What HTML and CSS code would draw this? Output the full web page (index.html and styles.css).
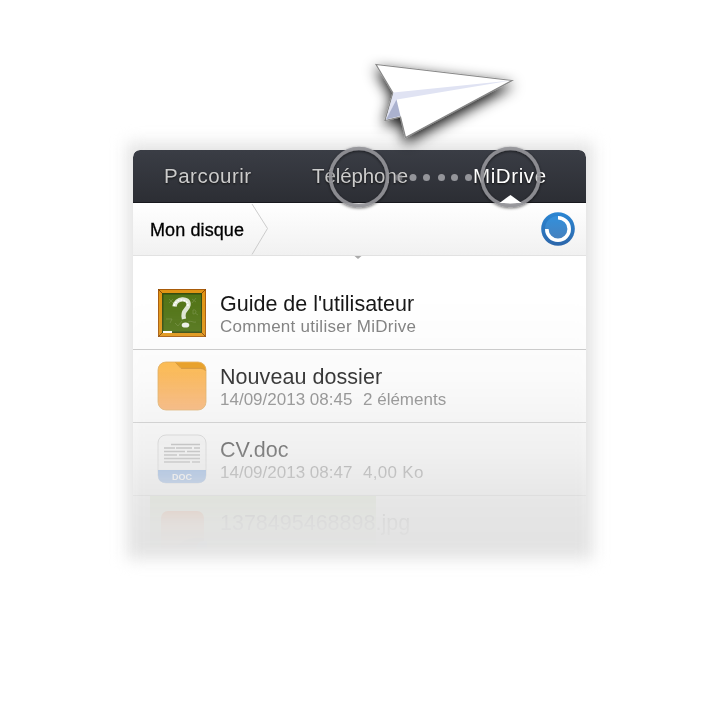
FILE: index.html
```
<!DOCTYPE html>
<html lang="fr">
<head>
<meta charset="utf-8">
<title>MiDrive</title>
<link rel="stylesheet" href="styles.css">
</head>
<body>
<main class="stage">
  <div class="glow"></div>
  <section class="app">
    <nav class="tabs">
      <span class="tab browse">Parcourir</span>
      <span class="tab phone">Téléphone</span>
      <span class="tab drive">MiDrive</span>
    </nav>
    <div class="crumbs">
      <span class="crumb">Mon disque</span>
      <svg class="chevron" width="18" height="52" viewBox="0 0 18 52"><path d="M1 1L16.500 25.500L1 51.500" fill="none" stroke="#ccc"/></svg>
      <svg class="sync" width="34" height="34" viewBox="0 0 34 34">
        <defs>
          <linearGradient id="rim" x1="0" y1="0" x2="0" y2="1"><stop stop-color="#2b86d3"/><stop offset="1" stop-color="#2c66aa"/></linearGradient>
          <linearGradient id="disc" x1="0" y1="0" x2="0" y2="1"><stop stop-color="#3290dc"/><stop offset="1" stop-color="#497fba"/></linearGradient>
        </defs>
        <circle cx="17" cy="17" r="16.800" fill="url(#rim)"/><circle cx="17" cy="17" r="13" fill="url(#disc)"/>
        <path d="M17 5.800A11.200 11.200 0 1 1 5.800 17" fill="none" stroke="#fff" stroke-width="3.600"/>
      </svg>
    </div>
    <div class="list">
      <article class="row">
        <svg class="icon" width="50" height="50" viewBox="0 0 50 50">
          <rect x="1" y="1" width="48" height="48" fill="#a85b0a"/><rect x="2" y="2" width="46" height="46" fill="#e09413"/>
          <path d="M1 1L6 6M49 1L44 6M1 49L6 44M49 49L44 44" stroke="#8a4907"/>
          <rect x="5" y="5" width="40" height="40" fill="#344c0e"/><rect x="6.500" y="6.500" width="37.500" height="37" fill="#4f7213"/>
          <path d="M12 11l4 4m0-4l-4 4M35 11l4 3m0-4l-4 5M18 35l3 3 4-5M36 22c4-1 4 4 0 4zm2 3l3 2M9 31h6l-2 4M31 34c3-2 5 1 8 0" fill="none" stroke="#6f8a3c" stroke-width=".8"/>
          <path d="M17.500 18.500c1-9 15-9.500 14-1.500C30.700 22.500 24.500 22 27 31" fill="none" stroke="#dfe5d3" stroke-width="4.400"/>
          <path d="M17 18c2-8 14-8 14 0" fill="none" stroke="#fff" stroke-width="1.500" stroke-dasharray="2 1"/>
          <ellipse cx="28.500" cy="37" rx="3.800" ry="2.600" fill="#edf0e6"/><rect x="6" y="43" width="9" height="2" fill="#fff"/>
        </svg>
        <div class="text"><h2 class="t-guide">Guide de l'utilisateur</h2><p class="s-guide">Comment utiliser MiDrive</p></div>
      </article>
      <article class="row">
        <svg class="icon" width="50" height="50" viewBox="0 0 50 50">
          <defs><linearGradient id="folder" x1="0" y1="0" x2="0" y2="1"><stop stop-color="#ffb53a"/><stop offset="1" stop-color="#fda95c"/></linearGradient></defs>
          <rect x="1" y="1" width="48" height="48" rx="8" fill="url(#folder)" stroke="#dda34d" stroke-width=".8"/>
          <path d="M18.500 1.400H41Q48.600 2 48.600 10Q47.500 7.400 43.500 7.400H25Z" fill="#e8950b"/>
          <path d="M18.500 1.400L24 7.400H43.500Q47.500 7.400 48.600 10" fill="none" stroke="#c98423" stroke-width=".8"/>
        </svg>
        <div class="text"><h2 class="t-folder">Nouveau dossier</h2><p><span class="s-date">14/09/2013 08:45</span><span class="s-count">2 éléments</span></p></div>
      </article>
      <article class="row">
        <svg class="icon" width="50" height="50" viewBox="0 0 50 50">
          <rect x="1" y="1" width="48" height="48" rx="8" fill="#fafafa" stroke="#d0d0d0"/>
          <path d="M1 36H49V41Q49 49 41 49H9Q1 49 1 41Z" fill="#6397df"/>
          <path d="M14 10.500H43M7 14H18M19 14H35M37 14H43M7 17.500H28M30 17.500H43M7 21H20M22 21H43M7 24.500H43M7 28H33M35 28H43" stroke="#a8a8a8" stroke-width="1.400"/>
          <text class="doc" x="25" y="46">DOC</text>
        </svg>
        <div class="text"><h2 class="t-doc">CV.doc</h2><p><span class="s-date">14/09/2013 08:47</span><span class="s-size">4,00 Ko</span></p></div>
      </article>
      <article class="row last">
        <svg class="icon" width="50" height="50" viewBox="0 0 50 50">
          <defs><linearGradient id="photo" x1="0" y1="0" x2="0" y2="1"><stop stop-color="#d95a10"/><stop offset="1" stop-color="#f4d19a"/></linearGradient></defs>
          <rect x="4" y="4" width="43" height="42" rx="7" fill="url(#photo)"/>
          <path d="M4 38Q16 43 25 35Q34 30 47 31V42H4Z" fill="#9b6754"/><circle cx="47" cy="42" r="8" fill="#63a6ee"/>
        </svg>
        <div class="text"><h2 class="t-photo">1378495468898.jpg</h2></div>
      </article>
    </div>
  </section>
  <svg class="overlay" width="240" height="220" viewBox="320 50 240 220">
    <defs>
      <filter id="shadow" x="-40%" y="-50%" width="180%" height="210%"><feDropShadow dx="0" dy="5" stdDeviation="7" flood-color="#000" flood-opacity=".95"/></filter>
      <filter id="soft" x="-30%" y="-30%" width="160%" height="160%"><feDropShadow dx="0" dy="1" stdDeviation="1.500" flood-color="#000" flood-opacity=".65"/></filter>
    </defs>
    <g filter="url(#shadow)">
      <path d="M376 64.500L512 80.500L405.500 137.500L400.500 117L385 120.500L393 93Z" fill="#fff" stroke="#888" stroke-width="1.200"/>
      <path d="M393.500 92.500L511 80.500L397 99.500L386 119.500Z" fill="#e0e3f3"/>
      <path d="M396.500 99.500L400.500 116L386 119.500Z" fill="#abb2cf"/>
    </g>
    <g filter="url(#soft)" fill="none" stroke="#939499" stroke-opacity=".9" stroke-width="3.500"><circle cx="359" cy="177" r="28.500"/><circle cx="510.500" cy="177" r="28.500"/></g>
    <g fill="#94959a"><circle cx="399" cy="177.500" r="3.500" fill-opacity=".6"/><circle cx="413" cy="177.500" r="3.500"/><circle cx="426.500" cy="177.500" r="3.500"/><circle cx="441.500" cy="177.500" r="3.500"/><circle cx="454.500" cy="177.500" r="3.500"/><circle cx="468.500" cy="177.500" r="3.500"/></g>
    <path d="M499.500 203L510.500 195L521.500 203Z" fill="#fff"/>
    <path d="M354.500 256H361.500L358 259Z" fill="#aaa"/>
  </svg>
</main>
</body>
</html>
```
FILE: styles.css
```
body { margin: 0; background: #fff; font-family: "Liberation Sans", Arial, sans-serif; }
.stage { position: relative; width: 720px; height: 728px; overflow: hidden; display: flow-root; }
.glow { position: absolute; left: 127px; top: 143px; width: 466px; height: 416px; background: #e3e3e3; filter: blur(8px); }
.app {
  position: relative; width: 453px; height: 400px; margin: 150px 0 0 133px; overflow: hidden;
  background: #fff; border-radius: 7px 7px 0 0;
  -webkit-mask-image: linear-gradient(#000 0 140px, rgba(0,0,0,.82) 227px, rgba(0,0,0,.48) 300px, rgba(0,0,0,.13) 350px, rgba(0,0,0,.05) 372px, transparent 400px);
  mask-image: linear-gradient(#000 0 140px, rgba(0,0,0,.82) 227px, rgba(0,0,0,.48) 300px, rgba(0,0,0,.13) 350px, rgba(0,0,0,.05) 372px, transparent 400px);
}
.tabs { display: flex; height: 53px; box-sizing: border-box; padding-left: 31px; align-items: center; background: linear-gradient(#3a3d45, #2c2e34); border-bottom: 1px solid #18191e; }
.tab { font-size: 20.5px; color: #ccc; text-shadow: 0 1px 2px #111; white-space: nowrap; }
.browse { width: 148px; letter-spacing: .5px; }
.phone { width: 161px; letter-spacing: -.1px; }
.drive { color: #fff; letter-spacing: .6px; }
.crumbs { display: flex; align-items: center; height: 53px; box-sizing: border-box; padding: 0 11px 0 17px; border-bottom: 1px solid #e2e2e2; background: linear-gradient(#fff, #f1f1f1); }
.crumb { width: 101px; padding-top: 2px; font-size: 18px; letter-spacing: .1px; color: #000; -webkit-text-stroke: .3px #000; white-space: nowrap; }
.sync { margin-left: auto; }
.list { padding-top: 21px; }
.row { display: flex; height: 73px; box-sizing: border-box; padding: 11px 0 0 24px; border-bottom: 1px solid #c7c7c7; }
.icon { flex: none; margin-right: 13px; }
.text { padding-top: 4px; white-space: nowrap; }
h2 { margin: 0; font-size: 21.5px; line-height: 24px; font-weight: 400; color: #111; }
p { display: flex; margin: 0; font-size: 17px; line-height: 21px; color: #7c7c7c; }
.t-folder { letter-spacing: .05px; }
.t-photo { color: #555; }
.s-guide { letter-spacing: .27px; }
.s-size { letter-spacing: .3px; }
.s-date { width: 143px; }
.last { border: 0; background: linear-gradient(#d0e2b8, #d0e2b8) 17px 0 / 226px 100% no-repeat; }
.doc { font: 700 9px "Liberation Sans", sans-serif; fill: #fff; text-anchor: middle; }
.overlay { position: absolute; left: 320px; top: 50px; overflow: visible; }
```
